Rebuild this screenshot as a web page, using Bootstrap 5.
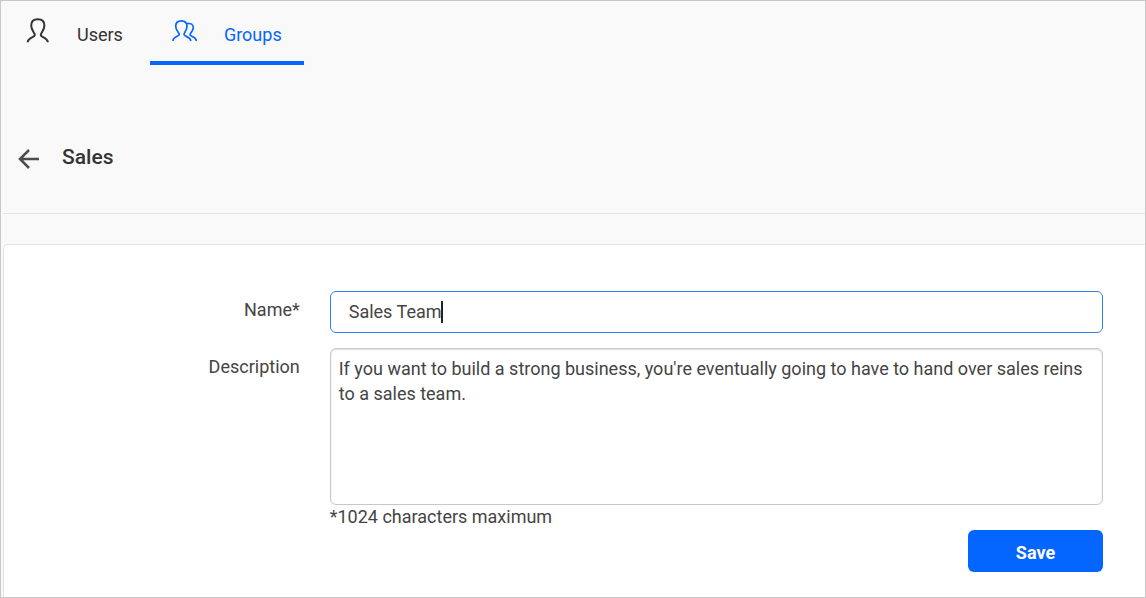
<!DOCTYPE html>
<html lang="en">
<head>
<meta charset="utf-8">
<meta name="viewport" content="width=device-width, initial-scale=1">
<title>Groups - Sales</title>
<link href="https://cdn.jsdelivr.net/npm/bootstrap@5.3.0/dist/css/bootstrap.min.css" rel="stylesheet">
<style>
  body { font-family: Roboto, "Liberation Sans", sans-serif; font-size: 18px; line-height: 25px; color: #444; background: #f9f9f9; }
  .app-shell { border: 1px solid #c8c8c8; }
  .top-tabs .nav-link { display: flex; align-items: center; height: 64px; padding: 6px 22px 0; color: #333; border-bottom: 4px solid transparent; }
  .top-tabs .nav-link.active { color: #0565ff; border-bottom-color: #0565ff; }
  .top-tabs svg { width: 26px; height: 28px; margin: 0 26px 10px 0; fill: none; stroke: currentColor; stroke-width: 2; }
  .top-tabs .users-tab { padding-left: 24px; padding-right: 27px; }
  .top-tabs .active svg { stroke-width: 1.700; }
  .page-head { height: 149px; margin-left: 2px; padding: 40px 15px 0; border-bottom: 1px solid #e3e3e3; }
  .page-head h1 { margin-left: 22px; padding-bottom: 4px; font-size: 21px; line-height: 26px; font-weight: 500; color: #333; }
  .back-link { color: #4c4c4c; line-height: 0; }
  .form-panel { margin: 30px 0 0 2px; padding: 46px 42px 24px 0; background: #fff; border: solid #e3e3e3; border-width: 1px 0 0 1px; border-top-left-radius: 5px; }
  .form-row { display: flex; gap: 29px; margin-bottom: 15px; }
  .form-row:last-of-type { margin-bottom: 0; }
  .field-label { width: 27%; flex: none; padding: 6px 1px 0 0; text-align: right; }
  .form-panel .form-control { font-size: 18px; line-height: 25px; color: #444; border-color: #c8c8c8; border-radius: 6px; }
  .form-panel .name-input { height: 42px; padding: 0 18px 2px; border-color: #2f80ed; }
  .form-panel .desc-input { height: 157px; padding: 7px 8px; resize: none; box-shadow: inset 0 1px 2px #ddd; }
  .text-caret { left: 111px; top: 10px; width: 2px; height: 22px; background: #222; }
  .field-help { padding-bottom: 2px; line-height: 23px; }
  .btn-save { width: 135px; height: 42px; padding: 2px 0 0; font-size: 18px; font-weight: 700; color: #fff; background: #0565ff; border: 0; border-radius: 6px; }
  .btn-save:hover { color: #fff; background: #0054dc; }
</style>
</head>
<body>
<div class="app-shell d-flex flex-column min-vh-100">
  <nav class="nav top-tabs" aria-label="Sections">
    <a class="nav-link users-tab" href="#users">
      <svg viewBox="0 0 26 28" aria-hidden="true"><path d="M2.700 27.200C2.700 22.500 9.800 22.500 9.800 20C9.800 18 6.200 15.500 6.200 10.500C6.200 6 8.500 4.300 12.800 4.300S19.400 6 19.400 10.500C19.400 15.500 15.800 18 15.800 20C15.800 22.500 22.800 22.500 22.800 27.200"/></svg>
      Users
    </a>
    <a class="nav-link active" href="#groups" aria-current="page">
      <svg viewBox="0 0 26 28" aria-hidden="true"><path d="M1 26C1 21.500 7.300 21.500 7.300 19.500C7.300 17.500 3.700 15.500 3.700 11.200C3.700 7.200 5.700 5.800 9.300 5.800S15 7.200 15 11.200C15 15.500 12 17.500 12 19.500C12 21.500 18.700 21.500 18.700 26M14.500 8.700C19 8 21.300 9.200 21.300 12.800C21.300 16.500 18 17.500 18 19.800C18 21.800 24.300 21.500 24.300 26"/></svg>
      Groups
    </a>
  </nav>
  <header class="page-head d-flex align-items-center">
    <a class="back-link" href="#groups" aria-label="Back to groups">
      <svg width="22" height="22" viewBox="0 0 22 22" fill="none" stroke="currentColor" stroke-width="2.500" aria-hidden="true"><path d="M21 11H2.500M11 2L2 11L11 20"/></svg>
    </a>
    <h1 class="mb-0">Sales</h1>
  </header>
  <main class="form-panel flex-grow-1">
    <form>
      <div class="form-row">
        <label class="field-label" for="group-name">Name*</label>
        <div class="position-relative flex-grow-1">
          <input class="form-control name-input" id="group-name" type="text" value="Sales Team">
          <span class="text-caret position-absolute" aria-hidden="true"></span>
        </div>
      </div>
      <div class="form-row mb-0">
        <label class="field-label" for="group-desc">Description</label>
        <div class="flex-grow-1">
          <textarea class="form-control desc-input" id="group-desc" maxlength="1024" aria-describedby="desc-help">If you want to build a strong business, you're eventually going to have to hand over sales reins to a sales team.</textarea>
          <div class="field-help" id="desc-help">*1024 characters maximum</div>
        </div>
      </div>
      <div class="d-flex justify-content-end">
        <button class="btn btn-save" type="submit">Save</button>
      </div>
    </form>
  </main>
</div>
<script src="https://cdn.jsdelivr.net/npm/bootstrap@5.3.0/dist/js/bootstrap.bundle.min.js"></script>
</body>
</html>
